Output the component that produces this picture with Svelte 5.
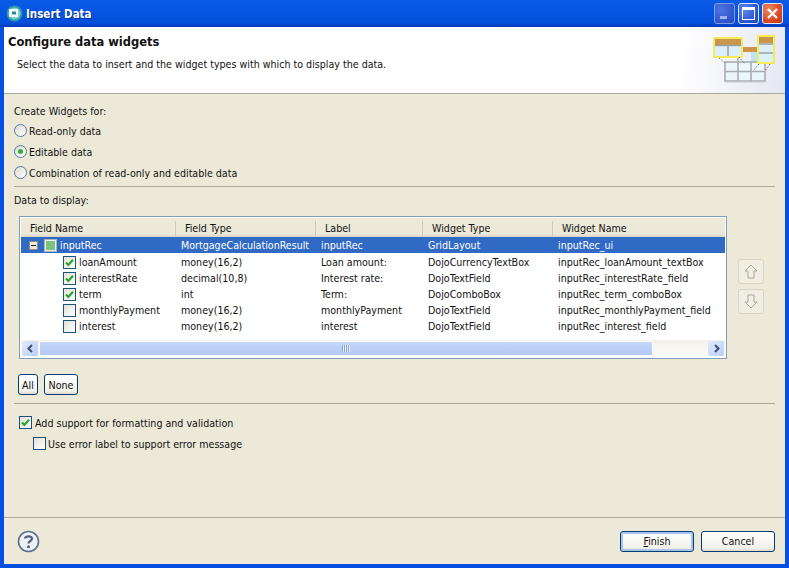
<script lang="ts">
  const rows = [
    { name: 'loanAmount', type: 'money(16,2)', label: 'Loan amount:', widget: 'DojoCurrencyTextBox', id: 'inputRec_loanAmount_textBox', on: true },
    { name: 'interestRate', type: 'decimal(10,8)', label: 'Interest rate:', widget: 'DojoTextField', id: 'inputRec_interestRate_field', on: true },
    { name: 'term', type: 'int', label: 'Term:', widget: 'DojoComboBox', id: 'inputRec_term_comboBox', on: true },
    { name: 'monthlyPayment', type: 'money(16,2)', label: 'monthlyPayment', widget: 'DojoTextField', id: 'inputRec_monthlyPayment_field', on: false },
    { name: 'interest', type: 'money(16,2)', label: 'interest', widget: 'DojoTextField', id: 'inputRec_interest_field', on: false }
  ];
  const headers = ['Field Name', 'Field Type', 'Label', 'Widget Type', 'Widget Name'];
  const modes = [
    { text: 'Read-only data', on: false },
    { text: 'Editable data', on: true },
    { text: 'Combination of read-only and editable data', on: false }
  ];
</script>

{#snippet check(on)}
  <span class="check">
    {#if on}
      <svg width="11" height="11" viewBox="0 0 11 11"><path d="M2 5.5 L4.4 8 L9 2.8" fill="none" stroke="#2aa52a" stroke-width="2.2" /></svg>
    {/if}
  </span>
{/snippet}

<div class="window">
  <header class="titlebar">
    <svg class="appicon" width="17" height="17" viewBox="0 0 17 17">
      <circle cx="8.5" cy="8.5" r="8" fill="#2f9aa6" />
      <circle cx="8.5" cy="8.5" r="6" fill="#7fd0d0" />
      <rect x="3" y="4" width="9" height="8" fill="#f4fbfb" />
      <rect x="6" y="6.500" width="4" height="3" fill="#2f8a9a" />
    </svg>
    <span class="title">Insert Data</span>
    <div class="winbtns">
      <span class="winbtn min"><i></i></span>
      <span class="winbtn max"><i></i></span>
      <span class="winbtn close">
        <svg width="13" height="13" viewBox="0 0 13 13"><path d="M2 2 L11 11 M11 2 L2 11" stroke="#fff" stroke-width="2.2" /></svg>
      </span>
    </div>
  </header>

  <div class="body">
    <section class="banner">
      <div>
        <h1>Configure data widgets</h1>
        <p>Select the data to insert and the widget types with which to display the data.</p>
      </div>
      <svg class="wizard" width="64" height="52" viewBox="0 0 64 52">
        <rect x="30" y="13" width="15" height="5" fill="#c8964e" />
        <rect x="38" y="18" width="6" height="10" fill="#bfe4f5" />
        <g stroke="#a9adb0" fill="none" stroke-width="1.600">
          <rect x="12" y="28" width="40" height="19" fill="#eaf5fc" />
          <path d="M12 37.500 H52 M25 20 V47 M38 28 V47" />
        </g>
        <path d="M12 47.800 H52" stroke="#c4c6c8" stroke-width="1.500" />
        <g>
          <rect x="1" y="4" width="28" height="19" fill="#dcf0fb" stroke="#f6ec5a" stroke-width="2" />
          <rect x="2" y="5" width="26" height="6" fill="#c8964e" />
          <path d="M2 11.500 H28 M15 11 V22" stroke="#9aa0a4" stroke-width="1.500" fill="none" />
        </g>
        <g>
          <rect x="45" y="2" width="16" height="27" fill="#dcf0fb" stroke="#f6ec5a" stroke-width="2" />
          <rect x="46" y="3" width="14" height="6" fill="#c8964e" />
          <path d="M46 10 H60 M46 19 H60" stroke="#9aa0a4" stroke-width="1.500" fill="none" />
        </g>
        <path d="M26 23 L32 30 M6 24 L12 29 M46 30 L40 37 M57 30 L52 37" stroke="#777" stroke-dasharray="1.500 1.500" fill="none" />
      </svg>
    </section>

    <main class="content">
      <div class="group">
        <div class="caption">Create Widgets for:</div>
        {#each modes as m}
          <div class="radio-row">
            <span class="radio">{#if m.on}<i></i>{/if}</span>
            <span>{m.text}</span>
          </div>
        {/each}
      </div>

      <hr class="sep first" />

      <div class="caption display">Data to display:</div>

      <div class="table-row">
        <div class="table">
          <div class="thead cols">
            {#each headers as h}<span>{h}</span>{/each}
          </div>
          <div class="tr cols selected">
            <span class="tree">
              <span class="twisty"><i></i></span>
              <span class="check tri"><i></i></span>
              inputRec
            </span>
            <span>MortgageCalculationResult</span>
            <span>inputRec</span>
            <span>GridLayout</span>
            <span>inputRec_ui</span>
          </div>
          {#each rows as r}
            <div class="tr cols">
              <span class="tree child">{@render check(r.on)}{r.name}</span>
              <span>{r.type}</span>
              <span>{r.label}</span>
              <span>{r.widget}</span>
              <span>{r.id}</span>
            </div>
          {/each}
          <div class="scrollbar">
            <span class="sb-btn">
              <svg width="9" height="9" viewBox="0 0 9 9"><path d="M6 1 L2.500 4.500 L6 8" fill="none" stroke="#3c4c78" stroke-width="2" /></svg>
            </span>
            <span class="thumb"><i></i></span>
            <span class="sb-track"></span>
            <span class="sb-btn">
              <svg width="9" height="9" viewBox="0 0 9 9"><path d="M3 1 L6.500 4.500 L3 8" fill="none" stroke="#3c4c78" stroke-width="2" /></svg>
            </span>
          </div>
        </div>
        <div class="movers">
          <span class="mover">
            <svg width="14" height="15" viewBox="0 0 14 15"><path d="M7 1 L13 7 H10 V14 H4 V7 H1 Z" fill="#f2f0e6" stroke="#aca899" /></svg>
          </span>
          <span class="mover">
            <svg width="14" height="15" viewBox="0 0 14 15"><path d="M7 14 L13 8 H10 V1 H4 V8 H1 Z" fill="#f2f0e6" stroke="#aca899" /></svg>
          </span>
        </div>
      </div>

      <div class="selectors">
        <button class="xp small">All</button>
        <button class="xp small">None</button>
      </div>

      <hr class="sep second" />

      <div class="option">{@render check(true)}<span>Add support for formatting and validation</span></div>
      <div class="option nested">{@render check(false)}<span>Use error label to support error message</span></div>
    </main>

    <footer class="footer">
      <svg class="help" width="23" height="23" viewBox="0 0 23 23">
        <circle cx="11.500" cy="11.500" r="10" fill="#eef1f6" stroke="#5f7190" stroke-width="1.600" />
        <path d="M8 8.500 C8 5.800 15 5.600 15 8.800 C15 11 11.500 11 11.500 13.500" fill="none" stroke="#4f607e" stroke-width="2.200" />
        <circle cx="11.500" cy="16.800" r="1.500" fill="#4f607e" />
      </svg>
      <div class="actions">
        <button class="xp wide default"><u>F</u>inish</button>
        <button class="xp wide">Cancel</button>
      </div>
    </footer>
  </div>
</div>

<style>
  :global(body) {
    margin: 0;
    background: #ece9d8;
  }
  .window {
    width: 789px;
    height: 568px;
    display: flex;
    flex-direction: column;
    font-family: 'DejaVu Sans', sans-serif;
    font-stretch: condensed;
    font-size: 10.6px;
    color: #111;
    overflow: hidden;
  }
  .titlebar {
    height: 27px;
    flex: none;
    display: flex;
    align-items: center;
    padding: 0 6px 0 6px;
    box-sizing: border-box;
    background: linear-gradient(#0a5be0 0, #0a5ae8 8%, #0554e2 45%, #0450dc 85%, #0338b8 100%);
  }
  .appicon {
    margin-right: 3px;
  }
  .title {
    color: #fff;
    font-weight: bold;
    font-size: 11.5px;
    text-shadow: 1px 1px #0a2f90;
  }
  .winbtns {
    margin-left: auto;
    display: flex;
    gap: 3px;
  }
  .winbtn {
    width: 21px;
    height: 21px;
    box-sizing: border-box;
    border: 1px solid #dfe8fb;
    border-radius: 3px;
    background: radial-gradient(circle at 30% 30%, #5f86ea, #2a52cf 70%, #2245bd);
    display: flex;
    align-items: center;
    justify-content: center;
    position: relative;
  }
  .winbtn.min {
    background: radial-gradient(circle at 30% 30%, #4f74e0, #2a50c8 80%);
    border-color: #7f9ae8;
  }
  .min i {
    width: 7px;
    height: 3px;
    background: #9db2ee;
    margin-top: 7px;
    margin-right: 3px;
  }
  .max i {
    width: 11px;
    height: 9px;
    border: 1px solid #fff;
    border-top-width: 3px;
  }
  .winbtn.close {
    background: radial-gradient(circle at 30% 30%, #ea8a60, #d8451f 65%, #c43a18);
  }
  .body {
    flex: 1;
    display: flex;
    flex-direction: column;
    border: solid #0550e0;
    border-width: 0 4px 4px;
    min-height: 0;
  }
  .banner {
    height: 66px;
    flex: none;
    background: linear-gradient(100deg, #fff 86%, #e4e6f2);
    border-bottom: 1px solid #a9a798;
    display: flex;
    justify-content: space-between;
    align-items: flex-start;
    padding-left: 4px;
  }
  h1 {
    margin: 8px 0 0;
    font-size: 11.5px;
    font-stretch: normal;
    font-weight: bold;
    line-height: 15px;
  }
  .banner p {
    margin: 7px 0 0 9px;
    line-height: 14px;
  }
  .wizard {
    margin: 7px 8px 0 0;
  }
  .content {
    flex: 1;
    padding: 10px 10px 0;
    display: flex;
    flex-direction: column;
    align-items: stretch;
    background: #ece9d8;
  }
  .caption {
    line-height: 14px;
  }
  .radio-row {
    display: flex;
    align-items: center;
    gap: 2px;
    height: 21px;
  }
  .group .caption {
    margin-bottom: 2px;
  }
  .radio {
    width: 13px;
    height: 13px;
    box-sizing: border-box;
    border: 1px solid #5a7a9e;
    border-radius: 50%;
    background: linear-gradient(135deg, #dcdad0, #fff);
    display: flex;
    align-items: center;
    justify-content: center;
  }
  .radio i {
    width: 5px;
    height: 5px;
    border-radius: 50%;
    background: #2fae3a;
  }
  .sep {
    border: 0;
    border-top: 1px solid #aca899;
    margin: 0;
    width: 100%;
  }
  .sep.first {
    margin-top: 3px;
  }
  .display {
    margin-top: 6px;
    margin-bottom: 9px;
  }
  .table-row {
    display: flex;
    align-items: flex-start;
  }
  .table {
    margin-left: 5px;
    width: 708px;
    height: 143px;
    flex: none;
    box-sizing: border-box;
    border: 1px solid #7f9db9;
    padding: 1px;
    background: #fff;
    display: flex;
    flex-direction: column;
  }
  .cols {
    display: grid;
    grid-template-columns: 154px 140px 107px 130px 173px;
  }
  .thead {
    height: 19px;
    flex: none;
    background: linear-gradient(#ece9d8 85%, #d8d5c2);
    align-items: center;
    padding-top: 1px;
    box-sizing: border-box;
  }
  .thead span {
    padding-left: 9px;
    height: 15px;
    line-height: 15px;
    border-left: 1px solid #cfccb8;
  }
  .thead span:first-child {
    border-left: 0;
  }
  .tr {
    height: 16px;
    line-height: 16px;
    white-space: nowrap;
  }
  .tr > span {
    padding-left: 6px;
  }
  .tr > .tree {
    padding-left: 8px;
    display: flex;
    align-items: center;
    gap: 3px;
  }
  .tr > .tree.child {
    padding-left: 42px;
    gap: 3px;
  }
  .tr.selected {
    background: #316ac5;
    color: #fff;
    margin-bottom: 1px;
  }
  .twisty {
    width: 9px;
    height: 9px;
    box-sizing: border-box;
    border: 1px solid #8f8f80;
    background: #eeeadb;
    display: flex;
    align-items: center;
    justify-content: center;
    margin-right: 3px;
  }
  .twisty i {
    width: 5px;
    height: 1px;
    background: #222;
  }
  .check {
    width: 13px;
    height: 13px;
    flex: none;
    box-sizing: border-box;
    border: 1px solid #1c5180;
    background: linear-gradient(135deg, #e2e0d6, #fff);
    display: inline-flex;
    align-items: center;
    justify-content: center;
  }
  .check.tri {
    border-color: #aab4c0;
    background: #f0f0ea;
  }
  .tri i {
    width: 9px;
    height: 9px;
    background: #7cc47c;
  }
  .scrollbar {
    margin-top: auto;
    height: 17px;
    display: flex;
    background: linear-gradient(#f3f1e7, #fdfdfa);
    flex: none;
  }
  .sb-btn {
    width: 16px;
    flex: none;
    box-sizing: border-box;
    margin: 1px;
    border-radius: 2px;
    background: linear-gradient(135deg, #e2ebfd, #b9cdf6);
    display: flex;
    align-items: center;
    justify-content: center;
  }
  .thumb {
    width: 614px;
    flex: none;
    box-sizing: border-box;
    margin: 1px 0;
    border: 1px solid #fff;
    border-radius: 2px;
    background: linear-gradient(#c5d7fa, #b3c9f5);
    display: flex;
    align-items: center;
    justify-content: center;
  }
  .thumb i {
    width: 8px;
    height: 7px;
    background: repeating-linear-gradient(90deg, #8fa9de 0 1px, #e6eefd 1px 2px);
  }
  .sb-track {
    flex: 1;
  }
  .movers {
    margin: 43px 0 0 11px;
    display: flex;
    flex-direction: column;
    gap: 5px;
  }
  .mover {
    width: 26px;
    height: 25px;
    box-sizing: border-box;
    border: 1px solid #d8d5c5;
    border-radius: 3px;
    background: #f0eee3;
    display: flex;
    align-items: center;
    justify-content: center;
  }
  .xp {
    font: inherit;
    font-stretch: condensed;
    color: inherit;
    padding: 0;
    box-sizing: border-box;
    border: 1px solid #003c74;
    border-radius: 3px;
    background: linear-gradient(#fff, #f2f1ea 85%, #dcd8cc);
  }
  .selectors {
    display: flex;
    gap: 6px;
    margin: 15px 0 0 4px;
  }
  .small {
    height: 21px;
  }
  .small:first-child {
    width: 20px;
  }
  .small:last-child {
    width: 34px;
  }
  .sep.second {
    margin-top: 8px;
  }
  .option {
    display: flex;
    align-items: center;
    gap: 3px;
    height: 21px;
    margin-left: 5px;
  }
  .sep.second + .option {
    margin-top: 8px;
  }
  .option.nested {
    margin-left: 19px;
    gap: 2px;
  }
  .footer {
    height: 47px;
    flex: none;
    box-sizing: border-box;
    border-top: 1px solid #aca899;
    background: #ece9d8;
    display: flex;
    align-items: center;
    justify-content: space-between;
    padding: 0 10px 0 13px;
  }
  .actions {
    display: flex;
    gap: 7px;
  }
  .wide {
    width: 74px;
    height: 21px;
  }
  .default {
    box-shadow: inset 0 0 0 2px #a9c4ee;
  }
</style>
